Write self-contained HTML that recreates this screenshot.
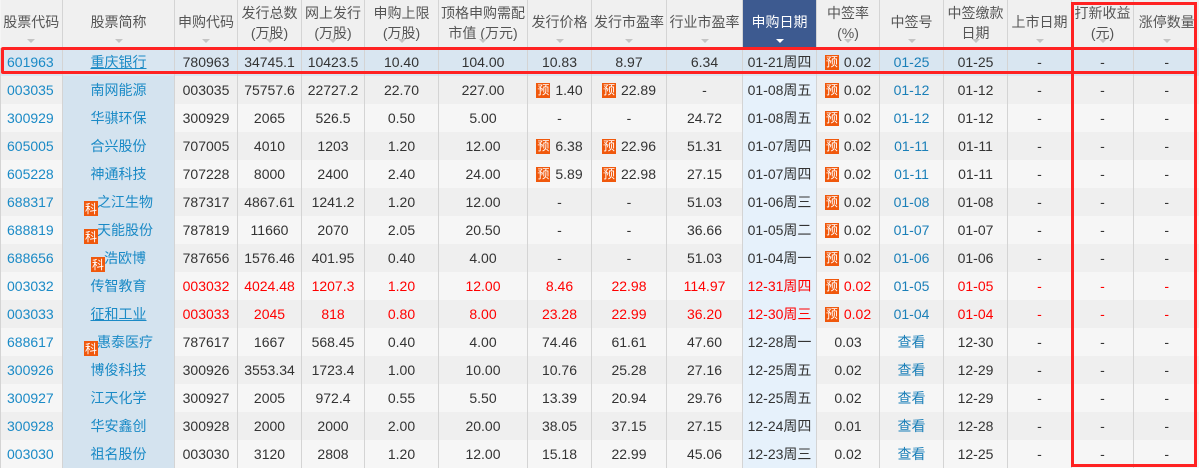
<!DOCTYPE html>
<html><head><meta charset="utf-8"><style>
*{margin:0;padding:0;box-sizing:border-box}
body{width:1199px;height:468px;overflow:hidden;background:#f5f5f5;font-family:"Liberation Sans","Noto Sans CJK SC",sans-serif;font-size:14px;color:#333;position:relative}
table{border-collapse:collapse;table-layout:fixed;width:1199px}
td,th{border-left:1px solid #d4d4d4;text-align:center;white-space:nowrap;overflow:hidden;padding:0}
th{height:48px;background:#f0f0f0;font-weight:normal;color:#555;line-height:20px;position:relative;vertical-align:top;padding-top:3px}
th.s{background:#3d5a90;color:#fff}
th:after{content:"";position:absolute;left:50%;margin-left:-4px;bottom:5px;border-left:4px solid transparent;border-right:4px solid transparent;border-top:4px solid #c4c4c4}
th.s:after{border-top-color:#fff}
th.one{padding-top:12px}
td{height:28px;line-height:16px;vertical-align:middle}
tr:nth-child(odd) td{background:#efefef}
tr:nth-child(even) td{background:#f6f6f6}
tr td.n{background:#d4e3ef}
tr td.d{background:#e6f1fb}
tr.h td{background:#d9e6f1}
td.c{text-align:left;padding-left:6px;color:#1a8ac6}
td.n{color:#1a8ac6}
.b{color:#1a7fb8}
.r{color:#f00}
.y{display:inline-block;width:14px;height:15px;background:#f0580c;color:#fff;font-size:12px;line-height:15px;text-align:center;vertical-align:top;margin-right:5px;position:relative;top:1px}
.k{display:inline-block;width:14px;height:16px;background:#f0580c;color:#fff;font-size:12px;line-height:16px;text-align:center;vertical-align:top;position:relative;top:7px;margin-right:-1px}
.box1{position:absolute;left:1px;top:47px;width:1196px;height:27px;border:3px solid #f22;border-radius:2px}
.box2{position:absolute;left:1071px;top:2px;width:126px;height:465px;border:3px solid #f22}
u{text-decoration:underline}
</style></head><body>
<table>
<colgroup><col style="width:62px"><col style="width:112px"><col style="width:63px"><col style="width:64px"><col style="width:63px"><col style="width:74px"><col style="width:89px"><col style="width:64px"><col style="width:75px"><col style="width:76px"><col style="width:74px"><col style="width:63px"><col style="width:64px"><col style="width:64px"><col style="width:64px"><col style="width:62px"><col style="width:66px"></colgroup>
<tr><th class="one" style="border-left:none">股票代码</th><th class="one">股票简称</th><th class="one">申购代码</th><th>发行总数<br>(万股)</th><th>网上发行<br>(万股)</th><th>申购上限<br>(万股)</th><th>顶格申购需配<br>市值 (万元)</th><th class="one">发行价格</th><th class="one">发行市盈率</th><th class="one">行业市盈率</th><th class="one s">申购日期</th><th>中签率<br>(%)</th><th class="one">中签号</th><th>中签缴款<br>日期</th><th class="one">上市日期</th><th>打新收益<br>(元)</th><th class="one">涨停数量</th></tr>
<tr class="h"><td class="c">601963</td><td class="n"><u>重庆银行</u></td><td>780963</td><td>34745.1</td><td>10423.5</td><td>10.40</td><td>104.00</td><td>10.83</td><td>8.97</td><td>6.34</td><td class="d">01-21周四</td><td><span class="y">预</span>0.02</td><td class="b">01-25</td><td>01-25</td><td>-</td><td>-</td><td>-</td></tr>
<tr><td class="c">003035</td><td class="n">南网能源</td><td>003035</td><td>75757.6</td><td>22727.2</td><td>22.70</td><td>227.00</td><td><span class="y">预</span>1.40</td><td><span class="y">预</span>22.89</td><td>-</td><td class="d">01-08周五</td><td><span class="y">预</span>0.02</td><td class="b">01-12</td><td>01-12</td><td>-</td><td>-</td><td>-</td></tr>
<tr><td class="c">300929</td><td class="n">华骐环保</td><td>300929</td><td>2065</td><td>526.5</td><td>0.50</td><td>5.00</td><td>-</td><td>-</td><td>24.72</td><td class="d">01-08周五</td><td><span class="y">预</span>0.02</td><td class="b">01-12</td><td>01-12</td><td>-</td><td>-</td><td>-</td></tr>
<tr><td class="c">605005</td><td class="n">合兴股份</td><td>707005</td><td>4010</td><td>1203</td><td>1.20</td><td>12.00</td><td><span class="y">预</span>6.38</td><td><span class="y">预</span>22.96</td><td>51.31</td><td class="d">01-07周四</td><td><span class="y">预</span>0.02</td><td class="b">01-11</td><td>01-11</td><td>-</td><td>-</td><td>-</td></tr>
<tr><td class="c">605228</td><td class="n">神通科技</td><td>707228</td><td>8000</td><td>2400</td><td>2.40</td><td>24.00</td><td><span class="y">预</span>5.89</td><td><span class="y">预</span>22.98</td><td>27.15</td><td class="d">01-07周四</td><td><span class="y">预</span>0.02</td><td class="b">01-11</td><td>01-11</td><td>-</td><td>-</td><td>-</td></tr>
<tr><td class="c">688317</td><td class="n"><span class="k">科</span>之江生物</td><td>787317</td><td>4867.61</td><td>1241.2</td><td>1.20</td><td>12.00</td><td>-</td><td>-</td><td>51.03</td><td class="d">01-06周三</td><td><span class="y">预</span>0.02</td><td class="b">01-08</td><td>01-08</td><td>-</td><td>-</td><td>-</td></tr>
<tr><td class="c">688819</td><td class="n"><span class="k">科</span>天能股份</td><td>787819</td><td>11660</td><td>2070</td><td>2.05</td><td>20.50</td><td>-</td><td>-</td><td>36.66</td><td class="d">01-05周二</td><td><span class="y">预</span>0.02</td><td class="b">01-07</td><td>01-07</td><td>-</td><td>-</td><td>-</td></tr>
<tr><td class="c">688656</td><td class="n"><span class="k">科</span>浩欧博</td><td>787656</td><td>1576.46</td><td>401.95</td><td>0.40</td><td>4.00</td><td>-</td><td>-</td><td>51.03</td><td class="d">01-04周一</td><td><span class="y">预</span>0.02</td><td class="b">01-06</td><td>01-06</td><td>-</td><td>-</td><td>-</td></tr>
<tr class="rr"><td class="c">003032</td><td class="n">传智教育</td><td class="r">003032</td><td class="r">4024.48</td><td class="r">1207.3</td><td class="r">1.20</td><td class="r">12.00</td><td class="r">8.46</td><td class="r">22.98</td><td class="r">114.97</td><td class="d r">12-31周四</td><td class="r"><span class="y">预</span>0.02</td><td class="b">01-05</td><td class="r">01-05</td><td class="r">-</td><td class="r">-</td><td class="r">-</td></tr>
<tr><td class="c">003033</td><td class="n"><u>征和工业</u></td><td class="r">003033</td><td class="r">2045</td><td class="r">818</td><td class="r">0.80</td><td class="r">8.00</td><td class="r">23.28</td><td class="r">22.99</td><td class="r">36.20</td><td class="d r">12-30周三</td><td class="r"><span class="y">预</span>0.02</td><td class="b">01-04</td><td class="r">01-04</td><td class="r">-</td><td class="r">-</td><td class="r">-</td></tr>
<tr><td class="c">688617</td><td class="n"><span class="k">科</span>惠泰医疗</td><td>787617</td><td>1667</td><td>568.45</td><td>0.40</td><td>4.00</td><td>74.46</td><td>61.61</td><td>47.60</td><td class="d">12-28周一</td><td>0.03</td><td class="b">查看</td><td>12-30</td><td>-</td><td>-</td><td>-</td></tr>
<tr><td class="c">300926</td><td class="n">博俊科技</td><td>300926</td><td>3553.34</td><td>1723.4</td><td>1.00</td><td>10.00</td><td>10.76</td><td>25.28</td><td>27.16</td><td class="d">12-25周五</td><td>0.02</td><td class="b">查看</td><td>12-29</td><td>-</td><td>-</td><td>-</td></tr>
<tr><td class="c">300927</td><td class="n">江天化学</td><td>300927</td><td>2005</td><td>972.4</td><td>0.55</td><td>5.50</td><td>13.39</td><td>20.94</td><td>29.76</td><td class="d">12-25周五</td><td>0.02</td><td class="b">查看</td><td>12-29</td><td>-</td><td>-</td><td>-</td></tr>
<tr><td class="c">300928</td><td class="n">华安鑫创</td><td>300928</td><td>2000</td><td>2000</td><td>2.00</td><td>20.00</td><td>38.05</td><td>37.15</td><td>27.15</td><td class="d">12-24周四</td><td>0.01</td><td class="b">查看</td><td>12-28</td><td>-</td><td>-</td><td>-</td></tr>
<tr><td class="c">003030</td><td class="n">祖名股份</td><td>003030</td><td>3120</td><td>2808</td><td>1.20</td><td>12.00</td><td>15.18</td><td>22.99</td><td>45.06</td><td class="d">12-23周三</td><td>0.02</td><td class="b">查看</td><td>12-25</td><td>-</td><td>-</td><td>-</td></tr>
</table>
<div class="box1"></div><div class="box2"></div>
</body></html>
